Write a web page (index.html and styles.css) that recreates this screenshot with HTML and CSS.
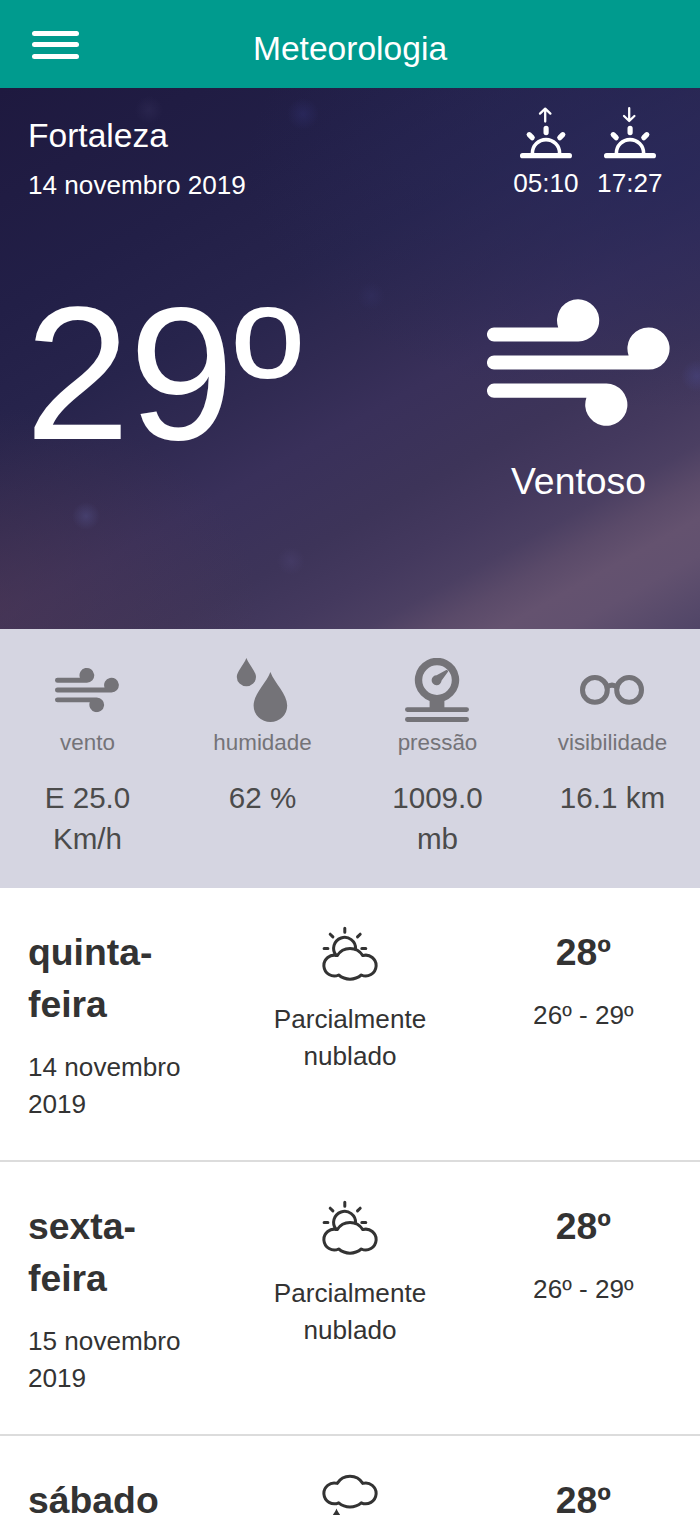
FILE: index.html
```html
<!DOCTYPE html>
<html lang="pt">
<head>
    <meta charset="UTF-8">
    <meta name="viewport" content="width=device-width, initial-scale=1.0">
    <title>Meteorologia</title>
    <link rel="stylesheet" href="styles.css">
</head>
<body>
    <svg class="symbols" width="0" height="0">
        <symbol id="wind" viewBox="0 0 183 127">
            <path d="M7 28.4H71.2A21.1 21.1 0 1 1 91.3 42.5H7A7 7 0 0 1 7 28.4Z"/>
            <path d="M7 56.5H141.6A21.1 21.1 0 1 1 161.7 70.6H7A7 7 0 0 1 7 56.5Z"/>
            <path d="M7 84.6H119.5A21.1 21.1 0 1 1 99.4 98.7H7A7 7 0 0 1 7 84.6Z"/>
        </symbol>
        <symbol id="sun-half" viewBox="0 0 52 52">
            <path d="M2.6 48.7H49.4" stroke-width="5.2"/>
            <path d="M12.4 47V46.2A13.6 13.6 0 0 1 39.6 46.2V47" stroke-width="3.6"/>
            <path d="M26.1 21.4V25.6M9.2 27.7L12.2 30.7M42.8 27.7L39.8 30.7" stroke-width="5.2"/>
        </symbol>
        <symbol id="cloud-sun" viewBox="0 0 56 56">
            <path d="M14.2 29.5A11 11 0 1 1 33.6 23"/>
            <path d="M22.8 2.2V6.2M8.2 8.2L10.9 10.9M38.2 8.2L35.5 10.9M2.1 22.4H5.9M39.8 22.4H43.8"/>
            <path d="M15.2 29.6A15 15 0 0 1 40.8 29.6A10.4 10.4 0 1 1 39.3 49A17.5 17.5 0 0 1 16.7 49A10.4 10.4 0 1 1 15.2 29.6Z"/>
        </symbol>
    </svg>

    <header class="navbar">
        <button class="menu" aria-label="Menu">
            <span></span>
            <span></span>
            <span></span>
        </button>
        <h1>Meteorologia</h1>
    </header>

    <section class="current">
        <div class="current-top">
            <div class="place">
                <h2>Fortaleza</h2>
                <p>14 novembro 2019</p>
            </div>
            <div class="sun">
                <div class="sun-time">
                    <svg class="line-icon" viewBox="0 0 52 52"><use href="#sun-half"/><path d="M25.2 14.6V1.8M20 6.6L25.2 1.6L30.4 6.6" stroke-width="2.3"/></svg>
                    <p>05:10</p>
                </div>
                <div class="sun-time">
                    <svg class="line-icon" viewBox="0 0 52 52"><use href="#sun-half"/><path d="M25.2 1.2V13.8M20 9L25.2 14L30.4 9" stroke-width="2.3"/></svg>
                    <p>17:27</p>
                </div>
            </div>
        </div>
        <div class="current-main">
            <div class="temperature">29º</div>
            <div class="condition">
                <svg><use href="#wind"/></svg>
                <p>Ventoso</p>
            </div>
        </div>
    </section>

    <section class="details">
        <div class="detail">
            <svg viewBox="0 0 64 64"><use href="#wind" y="9.8" width="64" height="44.4"/></svg>
            <h3>vento</h3>
            <p>E 25.0 Km/h</p>
        </div>
        <div class="detail">
            <svg viewBox="0 0 64 64">
                <path d="M16.4 0C19.7 8 26 13.6 26 19A9.6 9.3 0 0 1 6.8 19C6.8 13.6 13.1 8 16.4 0Z"/>
                <path d="M40.4 14C44.5 25 57.2 36 57.2 47.6A16.8 16.4 0 0 1 23.6 47.6C23.6 36 36.3 25 40.4 14Z"/>
            </svg>
            <h3>humidade</h3>
            <p>62 %</p>
        </div>
        <div class="detail">
            <svg viewBox="0 0 64 64">
                <path fill-rule="evenodd" d="M24.6 49.2V42.9A22.2 22.2 0 1 1 39.4 42.9V49.2H61.6A2.4 2.4 0 0 1 61.6 54H2.4A2.4 2.4 0 0 1 2.4 49.2ZM32 7.3A14.8 14.8 0 1 0 32 36.9A14.8 14.8 0 1 0 32 7.3Z"/>
                <path d="M40.8 12.3C42 11.2 43.8 12.8 42.8 14.1L36.6 22.6A5 5 0 1 1 31.6 17.2Z"/>
                <rect y="59" width="64" height="4.9" rx="2.4"/>
            </svg>
            <h3>pressão</h3>
            <p>1009.0 mb</p>
        </div>
        <div class="detail">
            <svg class="glasses" viewBox="0 0 64 64">
                <circle cx="14.9" cy="31.9" r="12.4"/>
                <circle cx="49.1" cy="31.9" r="12.4"/>
                <path d="M27 29.2Q32 24.9 37 29.2"/>
            </svg>
            <h3>visibilidade</h3>
            <p>16.1 km</p>
        </div>
    </section>

    <section class="forecast">
        <div class="day">
            <div class="day-name">
                <h3>quinta-feira</h3>
                <p>14 novembro 2019</p>
            </div>
            <div class="day-info">
                <svg class="line-icon"><use href="#cloud-sun"/></svg>
                <p>Parcialmente nublado</p>
            </div>
            <div class="day-info">
                <h3>28º</h3>
                <p>26º - 29º</p>
            </div>
        </div>
        <div class="day">
            <div class="day-name">
                <h3>sexta-feira</h3>
                <p>15 novembro 2019</p>
            </div>
            <div class="day-info">
                <svg class="line-icon"><use href="#cloud-sun"/></svg>
                <p>Parcialmente nublado</p>
            </div>
            <div class="day-info">
                <h3>28º</h3>
                <p>26º - 29º</p>
            </div>
        </div>
        <div class="day">
            <div class="day-name">
                <h3>sábado</h3>
            </div>
            <div class="day-info">
                <svg class="line-icon" viewBox="0 0 56 56">
                    <path d="M15.2 9.4A15 15 0 0 1 40.8 9.4A10.4 10.4 0 1 1 39.3 28.8A17.5 17.5 0 0 1 16.7 28.8A10.4 10.4 0 1 1 15.2 9.4Z"/>
                    <path class="drop" d="M14.5 34.5C15.5 38 18.8 40.5 18.8 43.5A4.3 4.3 0 0 1 10.2 43.5C10.2 40.5 13.5 38 14.5 34.5Z"/>
                </svg>
            </div>
            <div class="day-info">
                <h3>28º</h3>
            </div>
        </div>
    </section>
</body>
</html>
```
FILE: styles.css
```css
* {
    box-sizing: border-box;
}
body {
    margin: 0;
    height: 1515px;
    overflow: hidden;
    font-family: "Liberation Sans", Arial, sans-serif;
    font-size: 26.13px;
    line-height: 37.33px;
    color: #333;
    background-color: #fff;
}
h1, h2, h3, p {
    margin: 0;
}
svg {
    display: block;
    fill: currentColor;
}
.symbols {
    position: absolute;
}
.line-icon {
    fill: none;
    stroke: currentColor;
    stroke-width: 3;
    stroke-linecap: round;
    stroke-linejoin: round;
}

/* top bar */
.navbar {
    display: grid;
    grid-template-columns: 110px 1fr 110px;
    height: 88px;
    color: #fff;
    background-color: #009b8e;
}
.navbar h1 {
    padding-top: 25px;
    font-size: 33.6px;
    font-weight: normal;
    line-height: 48px;
    text-align: center;
}
.menu {
    display: flex;
    flex-direction: column;
    gap: 6.4px;
    padding: 31px 0 0 32px;
    border: 0;
    background: none;
}
.menu span {
    width: 46.5px;
    height: 5px;
    border-radius: 3px;
    background-color: #fff;
}

/* current weather */
.current {
    height: 541px;
    padding: 19px 28px 0;
    color: #fff;
    background:
        radial-gradient(circle at 86px 428px, rgba(86, 86, 145, .4), transparent 14px),
        radial-gradient(circle at 303px 26px, rgba(50, 50, 115, .4), transparent 16px),
        radial-gradient(circle at 149px 22px, rgba(60, 55, 100, .3), transparent 14px),
        radial-gradient(circle at 291px 473px, rgba(82, 72, 125, .3), transparent 14px),
        radial-gradient(circle at 697px 288px, rgba(75, 75, 145, .4), transparent 16px),
        radial-gradient(circle at 371px 208px, rgba(55, 53, 108, .3), transparent 14px),
        radial-gradient(ellipse 260px 200px at 0 520px, rgba(82, 58, 82, .5), transparent),
        radial-gradient(ellipse 420px 240px at 95% 15%, rgba(40, 40, 90, .8), transparent),
        linear-gradient(151deg, #1e193f 0%, #221f47 24%, #27244c 38%, #302a52 48%, #39305a 57%, #3d3459 68%, #44395e 75%, #4b3f62 80%, #5a4a69 84%, #64526f 88%, #62516f 92%, #504567 100%);
}
.current-top {
    display: flex;
    justify-content: space-between;
}
.place {
    padding-top: 5px;
}
.place h2 {
    margin-bottom: 6.5px;
    font-size: 33.6px;
    font-weight: normal;
    line-height: 48px;
}
.sun {
    display: flex;
    gap: 18.6px;
    padding-right: 9.5px;
}
.sun-time svg {
    width: 52px;
    height: 52px;
    margin: 0 auto 5.5px 6.5px;
}
.current-main {
    display: flex;
    justify-content: space-between;
    padding-top: 95px;
}
.temperature {
    margin-left: -3px;
    font-size: 189px;
    line-height: 150px;
    letter-spacing: -1px;
}
.condition {
    width: 187px;
    text-align: center;
}
.condition svg {
    width: 183px;
    height: 127px;
    margin: 0 2px 29.5px;
}
.condition p {
    font-size: 37.33px;
    line-height: 52px;
}

/* wind, humidity, pressure and visibility */
.details {
    display: grid;
    grid-template-columns: repeat(4, 1fr);
    height: 259px;
    padding-top: 29px;
    text-align: center;
    background-color: #d5d5e1;
}
.detail {
    padding: 0 28px;
    color: #747378;
}
.detail svg {
    width: 64px;
    height: 64px;
    margin: 0 auto 5px 27.4px;
}
.detail h3 {
    margin: 0 -20px 18px;
    font-size: 22.4px;
    font-weight: normal;
    line-height: 32px;
}
.detail p {
    font-size: 29.6px;
    line-height: 41.3px;
    color: #4b4b4b;
}
.detail .glasses {
    fill: none;
    stroke: currentColor;
    stroke-width: 5;
}

/* next days */
.day {
    display: grid;
    grid-template-columns: repeat(3, 1fr);
    height: 274px;
    padding-top: 37.5px;
    border-bottom: 2px solid #dcdcdc;
}
.forecast .day:last-child {
    height: 79px;
    border-bottom: 0;
}
.day-name {
    padding: 0 28px;
}
.day-info {
    padding: 0 28px;
    text-align: center;
}
.day h3 {
    margin-bottom: 19px;
    font-size: 37.33px;
    line-height: 52px;
}
.day-info svg {
    width: 56px;
    height: 56px;
    margin: 0 auto 19px;
}
.drop {
    fill: currentColor;
    stroke: none;
}
```
